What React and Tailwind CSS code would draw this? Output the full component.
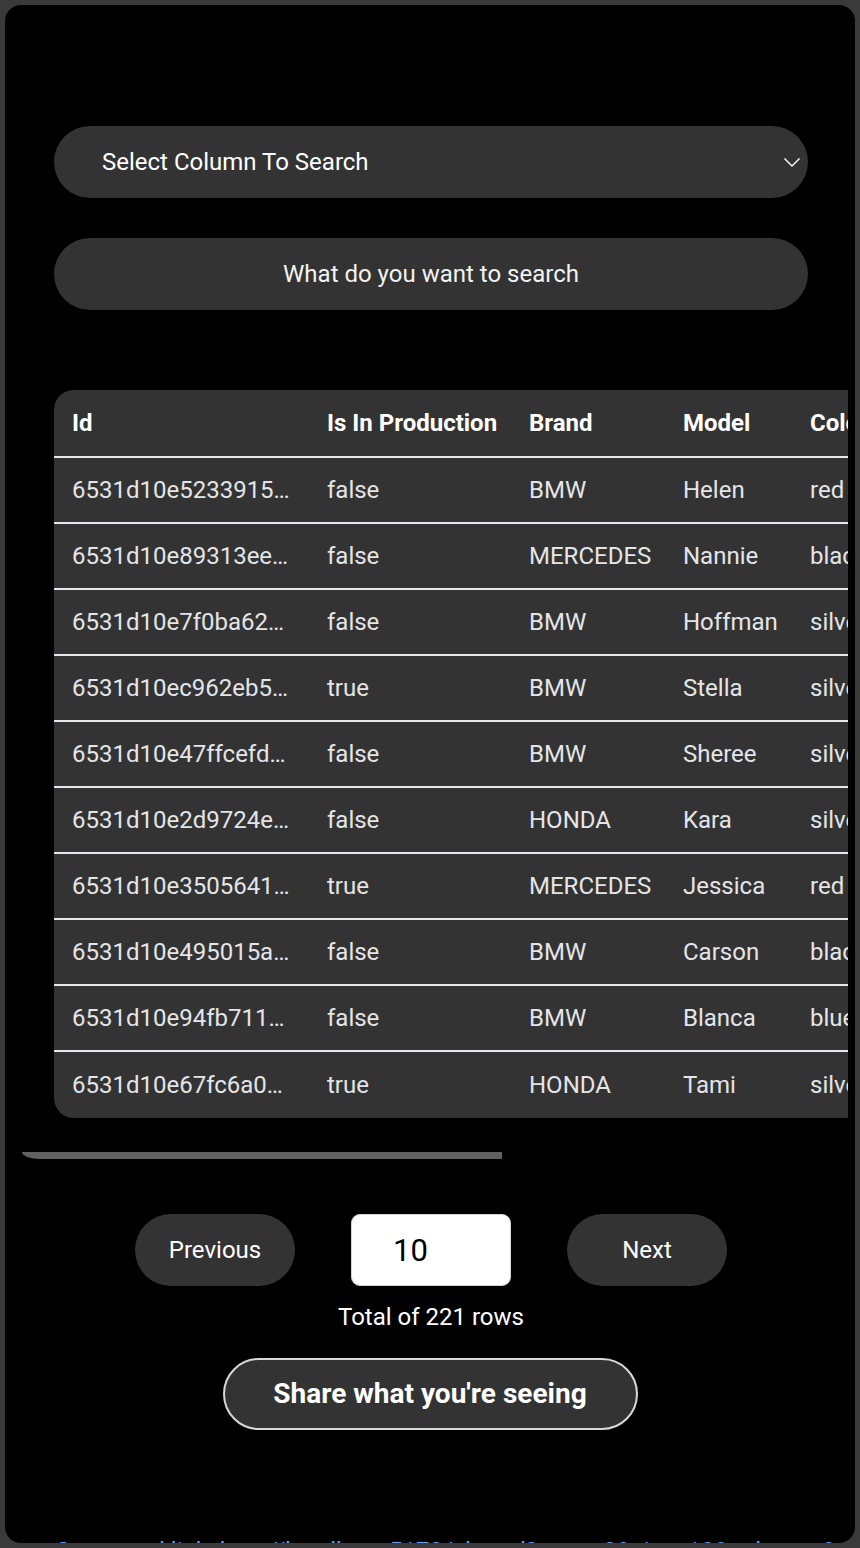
import { useState } from "react";

const columns = [
  { key: "id", label: "Id", w: "w-[255px]" },
  { key: "prod", label: "Is In Production", w: "w-[202px]" },
  { key: "brand", label: "Brand", w: "w-[154px]" },
  { key: "model", label: "Model", w: "w-[127px]" },
  { key: "color", label: "Color", w: "w-[130px]" },
  { key: "year", label: "Year", w: "w-[110px]" },
  { key: "price", label: "Price", w: "w-[130px]" },
];

const rows = [
  { id: "6531d10e5233915…", prod: "false", brand: "BMW", model: "Helen", color: "red", year: "2012", price: "31250" },
  { id: "6531d10e89313ee…", prod: "false", brand: "MERCEDES", model: "Nannie", color: "black", year: "2009", price: "18900" },
  { id: "6531d10e7f0ba62…", prod: "false", brand: "BMW", model: "Hoffman", color: "silver", year: "2015", price: "24400" },
  { id: "6531d10ec962eb5…", prod: "true", brand: "BMW", model: "Stella", color: "silver", year: "2020", price: "45100" },
  { id: "6531d10e47ffcefd…", prod: "false", brand: "BMW", model: "Sheree", color: "silver", year: "2011", price: "16700" },
  { id: "6531d10e2d9724e…", prod: "false", brand: "HONDA", model: "Kara", color: "silver", year: "2008", price: "9800" },
  { id: "6531d10e3505641…", prod: "true", brand: "MERCEDES", model: "Jessica", color: "red", year: "2021", price: "52300" },
  { id: "6531d10e495015a…", prod: "false", brand: "BMW", model: "Carson", color: "black", year: "2014", price: "21000" },
  { id: "6531d10e94fb711…", prod: "false", brand: "BMW", model: "Blanca", color: "blue", year: "2016", price: "27650" },
  { id: "6531d10e67fc6a0…", prod: "true", brand: "HONDA", model: "Tami", color: "silver", year: "2019", price: "19990" },
];

function Chevron() {
  return (
    <svg width="18" height="12" viewBox="0 0 18 12" fill="none">
      <polyline points="1.5,2.5 9,10 16.5,2.5" stroke="#ffffff" strokeWidth="1.4" />
    </svg>
  );
}

export default function App() {
  const [pageSize, setPageSize] = useState("10");

  return (
    <div
      className="bg-[#3a3a3a] p-[5px] h-[1548px]"
      style={{ fontFamily: "Roboto, 'Noto Sans', sans-serif" }}
    >
      <div className="bg-black rounded-[16px] h-[1538px] overflow-hidden text-white">
        <div className="pt-[121px] pl-[49px] w-[803px] flex flex-col gap-[40px]">
          <div className="h-[72px] rounded-full bg-[#333333] flex items-center justify-between pl-[48px] pr-[7px]">
            <span className="text-[24px] leading-[30px]">Select Column To Search</span>
            <Chevron />
          </div>
          <div className="h-[72px] rounded-full bg-[#333333] flex items-center justify-center">
            <span className="text-[24px] leading-[30px] text-[#f2f2f2]">What do you want to search</span>
          </div>
        </div>

        <div className="mt-[80px] ml-[17px] w-[826px] overflow-hidden">
          <div className="ml-[32px] w-[1208px] bg-[#333333] rounded-[20px]">
            <div className="flex h-[68px] border-b-2 border-[#e5e7eb] items-center">
              {columns.map((c) => (
                <div key={c.key} className={`${c.w} shrink-0 pl-[18px] text-[24px] font-bold text-white whitespace-nowrap`}>
                  {c.label}
                </div>
              ))}
            </div>
            {rows.map((r, i) => (
              <div
                key={r.id}
                className={
                  i < rows.length - 1
                    ? "flex h-[66px] border-b-2 border-[#e5e7eb] items-center"
                    : "flex h-[66px] items-center"
                }
              >
                {columns.map((c) => (
                  <div key={c.key} className={`${c.w} shrink-0 pl-[18px] text-[24px] text-[#e3e5e9] whitespace-nowrap`}>
                    {r[c.key]}
                  </div>
                ))}
              </div>
            ))}
          </div>
          <div className="mt-[34px] w-[480px] h-[7px] bg-[#616161] rounded-bl-[18px_7px]" />
        </div>

        <div className="mt-[55px] flex justify-center gap-[56px] pl-[2px]">
          <button className="w-[160px] h-[72px] rounded-full bg-[#333333] text-[24px] text-white">
            Previous
          </button>
          <input
            value={pageSize}
            onChange={(e) => setPageSize(e.target.value)}
            className="w-[160px] h-[72px] rounded-[9px] bg-white border border-[#d4d4d4] pl-[41px] text-[31px] text-black outline-none"
          />
          <button className="w-[160px] h-[72px] rounded-full bg-[#333333] text-[24px] text-white">
            Next
          </button>
        </div>

        <p className="mt-[16px] text-center text-[24px] pl-[2px] leading-[30px]">Total of 221 rows</p>

        <div className="mt-[26px] flex justify-center">
          <button className="w-[415px] h-[72px] rounded-full bg-[#333333] border-2 border-[#d9d9d9] text-[28px] font-bold text-white">
            Share what you're seeing
          </button>
        </div>

        <p className="mt-[106px] pl-[50px] text-[24px] text-[#6a9ff0] whitespace-nowrap leading-[30px]">
          Generated link: http://localhost:5173/shared?page=0&amp;size=10&amp;column=&amp;search=
        </p>
      </div>
    </div>
  );
}
